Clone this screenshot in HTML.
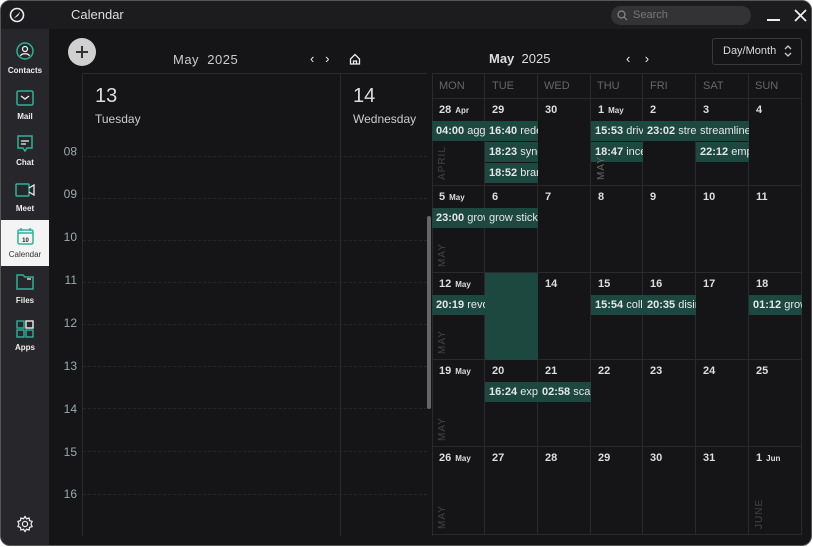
<!DOCTYPE html>
<html><head><meta charset="utf-8"><style>
*{margin:0;padding:0;box-sizing:border-box}
body{width:813px;height:547px;background:#fff;font-family:"Liberation Sans",sans-serif;overflow:hidden;position:relative}
.win{position:absolute;left:0;top:0;width:812px;height:546px;background:#151517;border-radius:10px;border:1px solid #555;overflow:hidden}
.title{position:absolute;left:0;top:0;width:100%;height:28px;background:#1c1c1f}
.abs{position:absolute}
.side{position:absolute;left:0;top:28px;width:48px;height:520px;background:#27272b}
.si{position:absolute;left:0;width:48px;text-align:center;color:#eee;font-size:8px;font-weight:bold}
.hl{position:absolute;left:82px;width:344px;height:0;border-top:1px dashed #26262a}
.hr{position:absolute;left:58px;width:18px;text-align:right;color:#9aa;font-size:12px}
.c{position:absolute;border-right:1px solid #2a2a2e;border-bottom:1px solid #2a2a2e}
.dn{position:absolute;color:#ddd;font-size:11px;font-weight:bold}
.dn small{font-size:8px;margin-left:4px}
.ev{position:absolute;height:20px;background:#1d4840;color:#e6e6e6;font-size:11px;line-height:20px;padding-left:4px;overflow:hidden;white-space:nowrap}
.ev b{font-weight:bold}
.mv{position:absolute;color:#444;font-size:10px;transform:rotate(-90deg);transform-origin:left top;letter-spacing:1px}
.wh{position:absolute;top:79px;color:#666;font-size:11px}
</style></head><body><div class="win">
<div class="title"></div>
<svg class="abs" style="left:8px;top:6px" width="16" height="16" viewBox="0 0 16 16"><circle cx="8" cy="8" r="6.5" fill="none" stroke="#eee" stroke-width="1.6"/><path d="M4.5 11.5 L11.5 4.5 L9 9 Z" fill="#eee"/></svg>
<div class="abs" style="left:70px;top:6px;color:#ddd;font-size:13px">Calendar</div>
<div class="abs" style="left:610px;top:5px;width:140px;height:19px;border-radius:10px;background:#333336"></div>
<svg class="abs" style="left:616px;top:9px" width="11" height="11" viewBox="0 0 11 11"><circle cx="4.5" cy="4.5" r="3.5" fill="none" stroke="#888" stroke-width="1.2"/><path d="M7 7 L10 10" stroke="#888" stroke-width="1.2"/></svg>
<div class="abs" style="left:632px;top:8px;color:#777;font-size:11px">Search</div>
<div class="abs" style="left:766px;top:18px;width:13px;height:2px;background:#eee"></div>
<svg class="abs" style="left:793px;top:8px" width="13" height="13" viewBox="0 0 13 13"><path d="M1 1L12 12M12 1L1 12" stroke="#eee" stroke-width="1.8"/></svg>

<div class="side"></div>
<div class="abs" style="left:0;top:219px;width:48px;height:46px;background:#f4f4f4"></div>
<svg class="abs" style="left:15px;top:41px" width="18" height="18" viewBox="0 0 18 18"><circle cx="9" cy="9" r="8" fill="none" stroke="#2bb39a" stroke-width="1.5"/><circle cx="9" cy="7" r="2.5" fill="none" stroke="#eee" stroke-width="1.3"/><path d="M4.5 14c1-3 8-3 9 0" fill="none" stroke="#eee" stroke-width="1.3"/></svg>
<div class="si" style="top:65px">Contacts</div>
<svg class="abs" style="left:15px;top:89px" width="18" height="16" viewBox="0 0 18 16"><rect x="1" y="1" width="16" height="14" rx="1.5" fill="none" stroke="#2bb39a" stroke-width="1.5"/><path d="M5 6l4 3 4-3" fill="none" stroke="#eee" stroke-width="1.3"/></svg>
<div class="si" style="top:111px">Mail</div>
<svg class="abs" style="left:15px;top:134px" width="18" height="18" viewBox="0 0 18 18"><path d="M2 1h14v12H11l-2 3-2-3H2z" fill="none" stroke="#2bb39a" stroke-width="1.5"/><path d="M5 6h8M5 9h5" stroke="#eee" stroke-width="1.3"/></svg>
<div class="si" style="top:157px">Chat</div>
<svg class="abs" style="left:14px;top:182px" width="20" height="14" viewBox="0 0 20 14"><rect x="1" y="1" width="13" height="12" rx="1" fill="none" stroke="#2bb39a" stroke-width="1.5"/><path d="M14 5l5-3v10l-5-3" fill="none" stroke="#eee" stroke-width="1.3"/></svg>
<div class="si" style="top:203px">Meet</div>
<svg class="abs" style="left:16px;top:226px" width="17" height="18" viewBox="0 0 17 18"><rect x="1" y="3" width="15" height="14" rx="1.5" fill="none" stroke="#2bb39a" stroke-width="1.5"/><path d="M4 1v3M13 1v3M1 6h15" stroke="#2bb39a" stroke-width="1.5"/><text x="8.5" y="15" font-size="6" font-weight="bold" text-anchor="middle" fill="#222" font-family="Liberation Sans">10</text></svg>
<div class="si" style="top:249px;color:#333;font-weight:normal">Calendar</div>
<svg class="abs" style="left:15px;top:273px" width="18" height="16" viewBox="0 0 18 16"><path d="M1 1h6l2 2h8v12H1z" fill="none" stroke="#2bb39a" stroke-width="1.5"/><path d="M11 5h4" stroke="#eee" stroke-width="1.3"/></svg>
<div class="si" style="top:295px">Files</div>
<svg class="abs" style="left:15px;top:319px" width="18" height="18" viewBox="0 0 18 18"><rect x="1" y="1" width="7" height="7" fill="none" stroke="#2bb39a" stroke-width="1.4"/><rect x="10" y="1" width="7" height="7" fill="none" stroke="#eee" stroke-width="1.4"/><rect x="1" y="10" width="7" height="7" fill="none" stroke="#2bb39a" stroke-width="1.4"/><rect x="10" y="10" width="7" height="7" fill="none" stroke="#2bb39a" stroke-width="1.4"/></svg>
<div class="si" style="top:342px">Apps</div>
<svg class="abs" style="left:15px;top:514px" width="18" height="18" viewBox="0 0 24 24"><path d="M12 2l2 3 3.5-1 .5 3.5 3.5 1-1.5 3.5 1.5 3.5-3.5 1-.5 3.5-3.5-1-2 3-2-3-3.5 1-.5-3.5-3.5-1L4 12 2.5 8.5 6 7.5 6.5 4 10 5z" fill="none" stroke="#eee" stroke-width="1.6"/><circle cx="12" cy="12" r="3.5" fill="none" stroke="#eee" stroke-width="1.6"/></svg>

<div class="abs" style="left:67px;top:37px;width:28px;height:28px;border-radius:50%;background:#d0d0d0"></div>
<div class="abs" style="left:75px;top:50px;width:12px;height:2px;background:#333"></div>
<div class="abs" style="left:80px;top:45px;width:2px;height:12px;background:#333"></div>
<div class="abs" style="left:172px;top:51px;color:#ccc;font-size:13px;letter-spacing:.5px">May &nbsp;2025</div>
<div class="abs" style="left:309px;top:50px;color:#eee;font-size:13px">‹ &nbsp;&nbsp;›</div>
<svg class="abs" style="left:348px;top:52px" width="12" height="12" viewBox="0 0 12 12"><path d="M1.5 6L6 1.5 10.5 6V11h-9z M4.5 11V8h3v3" fill="none" stroke="#eee" stroke-width="1.3"/></svg>

<div class="abs" style="left:81px;top:72px;width:1px;height:463px;background:#2a2a2e"></div>
<div class="abs" style="left:339px;top:72px;width:1px;height:463px;background:#2a2a2e"></div>
<div class="abs" style="left:81px;top:72px;width:345px;height:1px;background:#2a2a2e"></div>
<div class="abs" style="left:94px;top:84px;color:#ddd;font-size:20px">13</div>
<div class="abs" style="left:94px;top:111px;color:#ccc;font-size:12px">Tuesday</div>
<div class="abs" style="left:352px;top:84px;color:#ddd;font-size:20px">14</div>
<div class="abs" style="left:352px;top:111px;color:#ccc;font-size:12px">Wednesday</div>
<div class="hl" style="top:155px"></div><div class="hl" style="top:197px"></div><div class="hl" style="top:239px"></div><div class="hl" style="top:281px"></div><div class="hl" style="top:323px"></div><div class="hl" style="top:365px"></div><div class="hl" style="top:407px"></div><div class="hl" style="top:450px"></div><div class="hl" style="top:493px"></div>
<div class="hr" style="top:143px;transform:scaleY(-1)">08</div>
<div class="hr" style="top:186px">09</div><div class="hr" style="top:229px">10</div><div class="hr" style="top:272px">11</div><div class="hr" style="top:315px">12</div><div class="hr" style="top:358px">13</div><div class="hr" style="top:401px">14</div><div class="hr" style="top:444px">15</div><div class="hr" style="top:486px">16</div>
<div class="abs" style="left:426px;top:215px;width:4px;height:193px;background:#666;border-radius:2px"></div>

<div class="abs" style="left:488px;top:50px;color:#ddd;font-size:13px"><b>May</b> &nbsp;2025</div>
<div class="abs" style="left:625px;top:50px;color:#eee;font-size:13px">‹ &nbsp;&nbsp;&nbsp;›</div>
<div class="abs" style="left:711px;top:37px;width:90px;height:27px;border:1px solid #3a3a3e;border-radius:3px;color:#ddd;font-size:11px;padding:6px 0 0 10px">Day/Month</div>
<svg class="abs" style="left:783px;top:44px" width="8" height="12" viewBox="0 0 8 12"><path d="M1 4l3-3 3 3M1 8l3 3 3-3" fill="none" stroke="#ccc" stroke-width="1.3"/></svg>

<div class="abs" style="left:431px;top:72px;width:370px;height:463px;border:1px solid #2a2a2e;border-right:none;border-bottom:none"></div>
<div id="g"></div>
<div class="wh" style="left:438px">MON</div><div class="wh" style="left:491px">TUE</div><div class="wh" style="left:543px">WED</div><div class="wh" style="left:596px">THU</div><div class="wh" style="left:649px">FRI</div><div class="wh" style="left:702px">SAT</div><div class="wh" style="left:754px">SUN</div>
<div class="abs" style="left:484px;top:272px;width:53px;height:87px;background:#1d4840"></div>
</div>
<script>
var xs=[431,484,537,590,642,695,748,801],ys=[72,98,185,272,359,446,534],h='';
for(var r=0;r<6;r++)for(var c=0;c<7;c++)h+='<div class="c" style="left:'+xs[c]+'px;top:'+ys[r]+'px;width:'+(xs[c+1]-xs[c])+'px;height:'+(ys[r+1]-ys[r])+'px"></div>';
var d=[['28<small>Apr</small>','29','30','1<small>May</small>','2','3','4'],['5<small>May</small>','6','7','8','9','10','11'],['12<small>May</small>','13','14','15','16','17','18'],['19<small>May</small>','20','21','22','23','24','25'],['26<small>May</small>','27','28','29','30','31','1<small>Jun</small>']];
for(r=0;r<5;r++)for(c=0;c<7;c++)h+='<div class="dn" style="left:'+(xs[c]+7)+'px;top:'+(ys[r+1]+5)+'px">'+d[r][c]+'</div>';
var E=[[0,0,0,'04:00','aggregate'],[0,1,0,'16:40','redefine'],[0,1,1,'18:23','synergize'],[0,1,2,'18:52','brand'],[0,3,0,'15:53','drive'],[0,3,1,'18:47','incentivize'],[0,4,0,'23:02','streamline'],[0,5,0,'','streamline'],[0,5,1,'22:12','empower'],[1,0,0,'23:00','grow'],[1,1,0,'','grow sticky'],[2,0,0,'20:19','revolutionize'],[2,3,0,'15:54','collaborate'],[2,4,0,'20:35','disintermediate'],[2,6,0,'01:12','grow'],[3,1,0,'16:24','explore'],[3,2,0,'02:58','scale']];
E.forEach(function(e){h+='<div class="ev" style="left:'+xs[e[1]]+'px;width:'+(xs[e[1]+1]-xs[e[1]])+'px;top:'+(ys[e[0]+1]+22+e[2]*21)+'px"><b>'+e[3]+'</b> '+e[4]+'</div>';});
var m=[[0,'APRIL'],[0,'MAY',3],[1,'MAY'],[2,'MAY'],[3,'MAY'],[4,'MAY'],[4,'JUNE',6]];
m.forEach(function(a){var c=a[2]||0;h+='<div class="mv" style="left:'+(xs[c]+5)+'px;top:'+(ys[a[0]+2]-6)+'px;color:'+(a[0]==0&&c==3?'#666':'#444')+'">'+a[1]+'</div>';});
document.getElementById('g').innerHTML=h;
</script>
</body></html>
